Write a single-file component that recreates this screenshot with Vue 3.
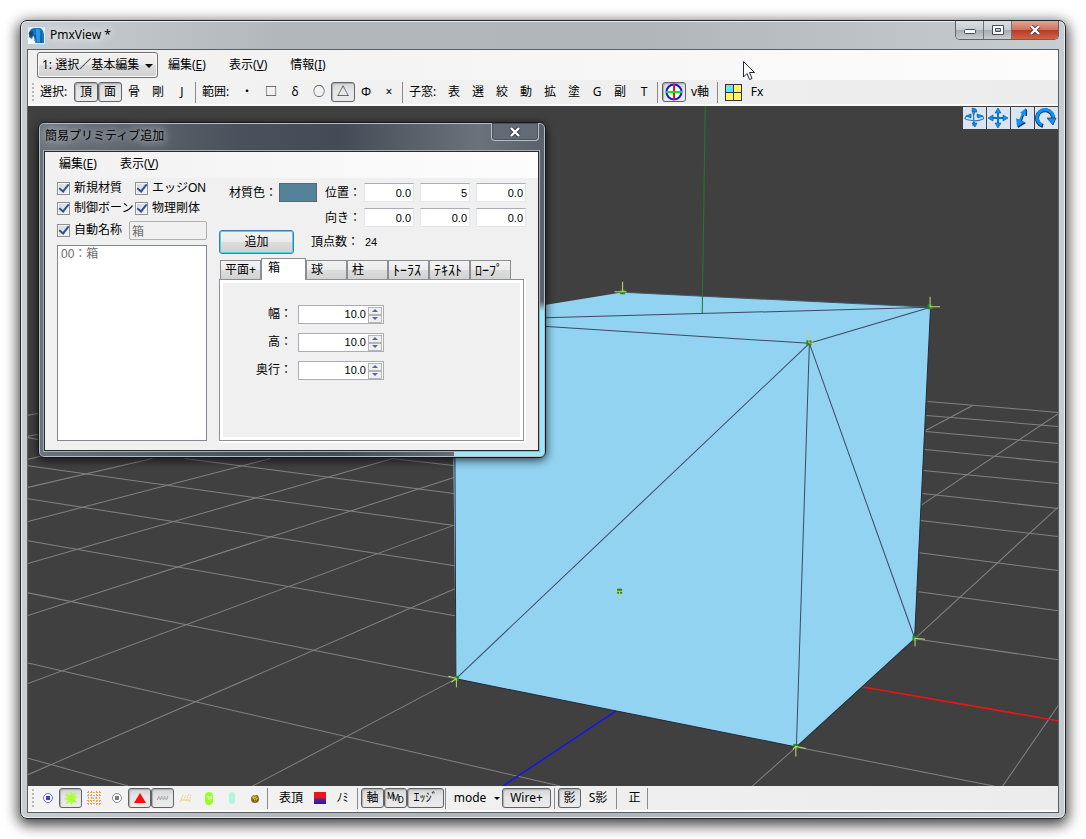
<script setup>
import { ref } from 'vue'

const mode = ref('1: 選択／基本編集')
const materialName = ref('箱')

const menus = [
  { label: '編集', key: 'E' },
  { label: '表示', key: 'V' },
  { label: '情報', key: 'I' },
]

const toolGroups = [
  { label: '選択:', items: ['頂', '面', '骨', '剛', 'J'], active: ['頂', '面'] },
  { label: '範囲:', items: ['・', '□', 'δ', '○', '△', 'Φ', '×'], active: ['△'] },
  { label: '子窓:', items: ['表', '選', '絞', '動', '拡', '塗', 'G', '副', 'T'], active: [] },
]
const narrow = ['Φ', 'G']

const checks = ref([
  { label: '新規材質', on: true },
  { label: 'エッジON', on: true },
  { label: '制御ボーン', on: true },
  { label: '物理剛体', on: true },
])
const autoName = ref(true)

const position = ref(['0.0', '5', '0.0'])
const rotation = ref(['0.0', '0.0', '0.0'])

const tabs = [
  { name: '平面+' },
  { name: '箱' },
  { name: '球' },
  { name: '柱' },
  { name: 'ﾄｰﾗｽ', kana: true },
  { name: 'ﾃｷｽﾄ', kana: true },
  { name: 'ﾛｰﾌﾟ', kana: true },
]
const activeTab = ref('箱')

const sizes = ref([
  { id: 'w', label: '幅：', value: '10.0' },
  { id: 'h', label: '高：', value: '10.0' },
  { id: 'd', label: '奥行：', value: '10.0' },
])

const step = (s, d) => {
  s.value = (parseFloat(s.value) + d).toFixed(1)
}

const grid = [
  [28, 415, 44, 412], [28, 436, 44, 433], [28, 437, 44, 440], [28, 459, 44, 455],
  [28, 465, 454, 525], [185, 458, 454, 493], [392, 458, 454, 465], [28, 498, 455, 565],
  [28, 540, 455, 615], [28, 592, 456, 678], [28, 662, 560, 785], [28, 757, 129, 785],
  [28, 774, 455, 588], [253, 785, 456, 678], [28, 683, 453, 525], [28, 615, 454, 477],
  [28, 563, 393, 458], [28, 521, 271, 458], [28, 487, 153, 458],
  [927, 401, 1058, 412], [926, 415, 1058, 426], [925, 431, 1058, 443], [924, 449, 1058, 462],
  [923, 470, 1058, 483], [922, 493, 1058, 508], [920, 520, 1058, 536], [919, 552, 1058, 570],
  [918, 591, 1058, 610], [914, 638, 1058, 659], [796, 746, 993, 785],
  [972, 405, 925, 430], [1058, 413, 920, 505], [1058, 506, 914, 638], [1058, 704, 1002, 785],
  [796, 746, 752, 785],
]

const edges = [
  [452, 320, 930, 307], [452, 320, 809, 343], [809, 343, 930, 307],
  [809, 343, 456, 678], [809, 343, 796, 746], [809, 343, 914, 637],
]

const vertices = [
  { x: 622.5, y: 291.5, arms: 'M-8 0H4M0 -10V0' },
  { x: 929.5, y: 306.5, arms: 'M0 0H10M0 -10V0' },
  { x: 808.5, y: 342.5, arms: 'M0 0L11 1M0 -11V0' },
  { x: 619.5, y: 590.5, arms: 'M-7 0H4M0 0V8' },
  { x: 456.5, y: 677.5, arms: 'M-8 -2L0 0V9M-5 4L0 0' },
  { x: 914.5, y: 637.5, arms: 'M10 1L0 0V8' },
  { x: 795.5, y: 745.5, arms: 'M10 2L0 0V10M-3 3L0 0' },
]
</script>

<template>
  <div class="desktop">
    <main class="window">
      <header class="titlebar">
        <svg class="app-icon" viewBox="0 0 17 17" aria-hidden="true">
          <rect width="17" height="17" fill="#e9edf0" />
          <path d="M1 6Q2 1 7 1H12Q15 2 16 7L16 16H8L7 11L5 9L4 12L1 10Z" fill="#1675bd" />
          <path d="M8 2Q12 1 13 6L12 15H9L8 8Z" fill="#299be5" />
          <path d="M1 6L4 4L5 8L3 10ZM7 8V16M13 4V16" fill="#26405e" stroke="#0c4b85" />
          <path d="M0 11L4 14H7V17H0Z" fill="#fff" />
        </svg>
        <h1 class="title">PmxView *</h1>
        <div class="caption-buttons">
          <button type="button" class="cap" aria-label="最小化">
            <svg viewBox="0 0 14 10"><rect x="1.500" y="4.500" width="11" height="4" rx="1" fill="#fff" stroke="#454b58" /></svg>
          </button>
          <button type="button" class="cap" aria-label="最大化">
            <svg viewBox="0 0 14 10"><path d="M1.500 .5H12.500V9.500H1.500ZM4.500 3.500V6.500H9.500V3.500Z" fill="#fff" fill-rule="evenodd" stroke="#454b58" /></svg>
          </button>
          <button type="button" class="cap cap-close" aria-label="閉じる">
            <svg viewBox="0 0 14 10"><path d="M3 1L11 9M11 1L3 9" stroke="#50393d" stroke-width="4" /><path d="M3 1L11 9M11 1L3 9" stroke="#fff" stroke-width="2.400" /></svg>
          </button>
        </div>
      </header>

      <div class="client">
        <nav class="menubar">
          <div class="mode-wrap">
            <select v-model="mode" class="mode-select" aria-label="モード">
              <option>1: 選択／基本編集</option>
            </select>
            <span class="caret"></span>
          </div>
          <button v-for="m in menus" :key="m.key" type="button" class="menu">{{ m.label }}(<u>{{ m.key }}</u>)</button>
          <svg class="cursor" viewBox="0 0 12 20" aria-hidden="true">
            <path d="M.5 .5V16L4 12.500L6.500 18.500L9 17.500L6.500 11.500H11.500Z" fill="#fff" stroke="#26263a" />
          </svg>
        </nav>

        <div class="toolbar" role="toolbar">
          <span class="grip"></span>
          <template v-for="g in toolGroups" :key="g.label">
            <span class="tool-label">{{ g.label }}</span>
            <button v-for="t in g.items" :key="t" type="button" class="tool" :class="{ on: g.active.includes(t), narrow: narrow.includes(t) }">{{ t }}</button>
            <span class="sep"></span>
          </template>
          <button type="button" class="tool on axis-btn" aria-label="軸">
            <svg width="18" height="18" viewBox="0 0 18 18">
              <circle cx="9" cy="9" r="7.500" fill="#fff" stroke="#1414e6" stroke-width="2" />
              <path d="M9 1V17" stroke="#f01414" stroke-width="2" /><path d="M1 9H17" stroke="#14e614" stroke-width="2" />
            </svg>
          </button>
          <button type="button" class="tool wide">v軸</button>
          <span class="sep gap"></span>
          <button type="button" class="tool" aria-label="分割表示">
            <svg width="17" height="17" viewBox="0 0 17 17">
              <rect x=".5" y=".5" width="16" height="16" fill="#fff85c" stroke="#333" />
              <rect x="1" y="1" width="7" height="7" fill="#62e6fb" /><path d="M8.500 1V16M1 8.500H16" stroke="#333" />
            </svg>
          </button>
          <button type="button" class="tool">Fx</button>
        </div>

        <section class="viewport">
          <svg class="scene" viewBox="28 106 1030 679" preserveAspectRatio="xMidYMid slice" aria-label="3Dビュー">
            <rect x="28" y="106" width="1030" height="679" fill="#404040" />
            <g stroke="#828282">
              <line v-for="(l, i) in grid" :key="i" :x1="l[0]" :y1="l[1]" :x2="l[2]" :y2="l[3]" />
            </g>
            <path d="M861 686L1058 720" stroke="#ee1414" stroke-width="1.500" />
            <path d="M616 710L503 785" stroke="#1414f0" stroke-width="1.500" />
            <path d="M452 320L623 292L930 307L914 638L796 746L456 678Z" fill="#91d3f1" />
            <path d="M455 450L456 678L796 746L914 638L930 307" fill="none" stroke="#252b3a" />
            <path d="M623 292L930 307" stroke="#43566a" />
            <path d="M705 106L702 313" stroke="#1f7a24" />
            <g stroke="#3f4862">
              <line v-for="(l, i) in edges" :key="i" :x1="l[0]" :y1="l[1]" :x2="l[2]" :y2="l[3]" />
            </g>
            <g v-for="(v, i) in vertices" :key="i" :transform="`translate(${v.x} ${v.y})`">
              <rect x="-2.500" y="-2.500" width="5" height="5" fill="#2b8420" />
              <path :d="v.arms" fill="none" stroke="#c8d27e" />
            </g>
          </svg>

          <div class="nav-tiles">
            <button type="button" class="tile" aria-label="回転">
              <svg viewBox="0 0 22 22">
                <path d="M9 3Q12 11 10 19M12 4Q9 11 12 18M4 9Q-1 12 6 13Q14 15 20 12Q22 10 18 9" fill="none" stroke="#277fbd" stroke-width="1.200" />
                <path d="M9 1L13 2L14 5L10 5ZM3 9L8 7L8 11ZM14 9L14 7L20 9L15 11ZM9 16L14 16L12 20Z" fill="#0794ff" stroke="#164c73" stroke-width=".6" />
              </svg>
            </button>
            <button type="button" class="tile" aria-label="移動">
              <svg viewBox="0 0 22 22">
                <path d="M11 4V18M4 11H18" stroke="#164c73" stroke-width="2" />
                <path d="M11 1L14 6H8ZM21 11L16 14V8ZM11 21L8 16H14ZM1 11L6 8V14Z" fill="#0794ff" stroke="#164c73" stroke-width=".6" />
                <path d="M11 5V17M5 11H17" stroke="#0794ff" stroke-width="1.200" />
              </svg>
            </button>
            <button type="button" class="tile" aria-label="ズーム">
              <svg viewBox="0 0 22 22">
                <path d="M15 2V9L12 8L10 14L14 16L6 21L5 12L8 13L11 7L9 6Z" fill="#1a2335" transform="translate(1 0)" />
                <path d="M15 1V9L12 8L10 14L14 15L6 20L5 11L8 13L11 6L9 6Z" fill="#0794ff" />
              </svg>
            </button>
            <button type="button" class="tile" aria-label="ロール">
              <svg viewBox="0 0 22 22">
                <path d="M8 19A8 8 0 1 1 18 12" fill="none" stroke="#18304b" stroke-width="4" />
                <path d="M7 18A8 8 0 1 1 18 12" fill="none" stroke="#0794ff" stroke-width="3" />
                <path d="M12 11H21L18 18Z" fill="#0794ff" stroke="#18304b" stroke-width=".7" />
              </svg>
            </button>
          </div>

          <section class="dialog" role="dialog" aria-label="簡易プリミティブ追加">
            <header class="dlg-title">
              <h2>簡易プリミティブ追加</h2>
              <button type="button" class="dlg-close" aria-label="閉じる">
                <svg width="14" height="10" viewBox="0 0 14 10"><path d="M3 1L11 9M11 1L3 9" stroke="#333a44" stroke-width="4" /><path d="M3 1L11 9M11 1L3 9" stroke="#fff" stroke-width="2.400" /></svg>
              </button>
            </header>
            <div class="dlg-client">
              <nav class="dlg-menu">
                <button v-for="m in menus.slice(0, 2)" :key="m.key" type="button" class="menu">{{ m.label }}(<u>{{ m.key }}</u>)</button>
              </nav>
              <div class="dlg-body">
                <div class="left">
                  <div class="checks">
                    <label v-for="c in checks" :key="c.label" class="check"><input v-model="c.on" type="checkbox" />{{ c.label }}</label>
                  </div>
                  <div class="auto">
                    <label class="check"><input v-model="autoName" type="checkbox" />自動名称</label>
                    <input v-model="materialName" class="name-input" type="text" aria-label="名称" disabled />
                  </div>
                  <ul class="list"><li>00：箱</li></ul>
                </div>

                <div class="right">
                  <div class="row">
                    <span class="lbl-color">材質色：</span>
                    <button type="button" class="swatch" aria-label="材質色"></button>
                    <span class="lbl-vec">位置：</span>
                    <div class="vec"><input v-for="(p, i) in position" :key="i" v-model="position[i]" type="text" :aria-label="`位置 ${i + 1}`" /></div>
                  </div>
                  <div class="row">
                    <span class="lbl-vec">向き：</span>
                    <div class="vec"><input v-for="(p, i) in rotation" :key="i" v-model="rotation[i]" type="text" :aria-label="`向き ${i + 1}`" /></div>
                  </div>
                  <div class="add-row">
                    <button type="button" class="add">追加</button>
                    <span class="count-label">頂点数：</span><span class="count">24</span>
                  </div>
                  <div class="tabs" role="tablist">
                    <button v-for="t in tabs" :key="t.name" type="button" role="tab" class="tab" :class="{ current: t.name === activeTab, kana: t.kana }" :aria-selected="t.name === activeTab" @click="activeTab = t.name">{{ t.name }}</button>
                  </div>
                  <div class="panel" role="tabpanel">
                    <div v-for="s in sizes" :key="s.id" class="size">
                      <label :for="`size-${s.id}`">{{ s.label }}</label>
                      <div class="spin">
                        <input :id="`size-${s.id}`" v-model="s.value" type="text" />
                        <div class="arrows">
                          <button type="button" aria-label="増やす" @click="step(s, 1)"><svg viewBox="0 0 6 3"><path d="M0 3L3 0L6 3Z" fill="#5463b5" /></svg></button>
                          <button type="button" aria-label="減らす" @click="step(s, -1)"><svg viewBox="0 0 6 3"><path d="M0 0L3 3L6 0Z" fill="#5463b5" /></svg></button>
                        </div>
                      </div>
                    </div>
                  </div>
                </div>
              </div>
            </div>
          </section>
        </section>

        <footer class="toolbar bottom" role="toolbar">
          <span class="grip"></span>
          <button type="button" class="tool" aria-label="頂点">
            <svg viewBox="0 0 16 16"><circle cx="8" cy="8" r="4.500" fill="#fff" stroke="#6a6ae0" /><rect x="6" y="6" width="4" height="4" fill="#3c3cd8" /></svg>
          </button>
          <button type="button" class="tool on" aria-label="法線">
            <svg viewBox="0 0 16 16"><path d="M8 1L10 4L13 2L12 6L15 7L12 9L14 13L10 12L8 15L7 12L3 14L4 10L1 9L4 7L2 3L6 5Z" fill="#a8ff38" /><path d="M4 12L12 4M3 9L9 3M7 13L13 7" stroke="#d3ff8c" stroke-dasharray="1 1" /></svg>
          </button>
          <button type="button" class="tool" aria-label="ワイヤー">
            <svg viewBox="0 0 16 16"><path d="M1 2.500H15M1 5.500H15M1 10.500H15M1 13.500H15M2.500 1V15M5.500 1V15M10.500 1V15M13.500 1V15M6 8H10" stroke="#eda14c" stroke-dasharray="2 1" /></svg>
          </button>
          <button type="button" class="tool" aria-label="中心">
            <svg viewBox="0 0 16 16"><circle cx="8" cy="8" r="4.500" fill="#fff" stroke="#8b8b8b" /><rect x="6" y="6" width="4" height="4" fill="#7b7b7b" /></svg>
          </button>
          <button type="button" class="tool on" aria-label="面">
            <svg viewBox="0 0 16 16"><path d="M8 3L14 13H2Z" fill="#fa0c0c" /></svg>
          </button>
          <button type="button" class="tool on" aria-label="エッジ線">
            <svg viewBox="0 0 16 16"><path d="M2 10L4 6M5 10L7 6M8 10L10 6M11 10L13 6M3 8H13" stroke="#999" stroke-dasharray="2 1" fill="none" /></svg>
          </button>
          <button type="button" class="tool" aria-label="選択線">
            <svg viewBox="0 0 16 16"><path d="M2 12L5 5M5 11L8 5M8 11L11 4M11 12L13 5M3 10H13" stroke="#ead27d" stroke-dasharray="2 1" fill="none" /></svg>
          </button>
          <button type="button" class="tool" aria-label="剛体">
            <svg viewBox="0 0 16 16"><rect x="4" y="2" width="8" height="13" rx="4" fill="#98ff28" /><path d="M6 7L8 6V10M10 6V9" stroke="#f4ffe5" fill="none" /></svg>
          </button>
          <button type="button" class="tool" aria-label="ジョイント">
            <svg viewBox="0 0 16 16"><rect x="5" y="2" width="6" height="12" rx="3" fill="#b4f5de" /></svg>
          </button>
          <button type="button" class="tool" aria-label="ボーン">
            <svg viewBox="0 0 16 16"><circle cx="8" cy="9" r="4" fill="#7c7028" /><path d="M5 7L8 5L11 8L8 12Z" fill="#c9ca35" /><path d="M6 10H11M8 6V12M10 5V8" stroke="#8b321d" stroke-dasharray="1 1" /></svg>
          </button>
          <span class="sep"></span>
          <button type="button" class="tool word">表頂</button>
          <button type="button" class="tool" aria-label="ウェイト"><span class="heat"></span></button>
          <button type="button" class="tool">ﾉﾐ</button>
          <span class="sep late"></span>
          <button type="button" class="tool on">軸</button>
          <button type="button" class="tool on" aria-label="MMD">
            <svg class="mmd" viewBox="0 0 18 16"><text x="0 5 11" y="9 11 13">MMD</text></svg>
          </button>
          <button type="button" class="tool on edge">ｴｯｼﾞ</button>
          <span class="sep"></span>
          <button type="button" class="tool mode">mode<span class="caret small"></span></button>
          <button type="button" class="tool on wire">Wire+</button>
          <span class="sep late"></span>
          <button type="button" class="tool on">影</button>
          <button type="button" class="tool word">S影</button>
          <span class="sep"></span>
          <button type="button" class="tool">正</button>
          <span class="sep"></span>
        </footer>
      </div>
    </main>
  </div>
</template>

<style>
html, body { margin: 0; background: #fff; }
</style>

<style scoped>
* { box-sizing: border-box; }
.desktop {
  display: flex;
  min-height: 100vh;
  padding: 20px;
  background: #fff;
  color: #000;
  font: 12px/16px "Noto Sans", "Noto Sans CJK JP", sans-serif;
  overflow: hidden;
}
button, input, select { font: inherit; color: inherit; margin: 0; padding: 0; border-radius: 0; }
button { background: none; border: 0; white-space: nowrap; }
svg { display: block; }

.window {
  flex: 1;
  display: flex;
  flex-direction: column;
  min-width: 0;
  padding: 0 6px 5px;
  border: 1px solid #22262b;
  border-radius: 7px;
  background: linear-gradient(90deg, #c9ced2 0, #b2b7bb 260px, #b1b6ba 60%, #c8cdd1 100%);
  box-shadow: inset 0 0 0 1px #e8ebee, 0 4px 14px 2px rgba(0, 0, 0, .75);
}
.titlebar { display: flex; height: 28px; align-items: flex-start; }
.app-icon { width: 17px; height: 17px; margin: 6px 5px 0 1px; }
.title {
  margin: 5px 0 0;
  padding: 0 12px 0 0;
  font-size: 12px;
  font-weight: 400;
  line-height: 18px;
  text-shadow: 0 0 8px #fff, 0 0 12px #fff;
}
.caption-buttons {
  display: flex;
  margin-left: auto;
  border: 1px solid #5e646b;
  border-top: 0;
  border-radius: 0 0 5px 5px;
  overflow: hidden;
}
.cap {
  display: grid;
  place-items: center;
  width: 28px;
  height: 18px;
  border-right: 1px solid #6d737a;
  background: linear-gradient(#dcdfe2, #c8cbcf 50%, #a8acb1 51%, #c8ccd1);
}
.cap svg { width: 14px; height: 10px; }
.cap-close { width: 46px; border: 0; background: linear-gradient(#e5a493, #d0705b 50%, #bb3a22 51%, #d16245); }

.client {
  flex: 1;
  display: flex;
  flex-direction: column;
  min-height: 0;
  border: 1px solid #5a5f64;
  background: #f0f0f0;
}
.menubar {
  position: relative;
  display: flex;
  align-items: center;
  gap: 23px;
  height: 30px;
  padding-left: 9px;
  background: linear-gradient(90deg, #f0f0f0, #fcfcfc);
}
.mode-wrap { position: relative; margin-right: -13px; }
.mode-select {
  appearance: none;
  display: block;
  width: 121px;
  height: 26px;
  padding: 0 18px 0 4px;
  border: 1px solid #707070;
  border-radius: 3px;
  background: linear-gradient(#f2f2f2, #ebebeb 50%, #dddddd 51%, #d0d0d0);
  box-shadow: inset 0 0 0 1px #fafafa;
}
.caret {
  position: absolute;
  right: 5px;
  top: 12px;
  border: 4px solid transparent;
  border-top-color: #000;
  border-bottom: 0;
}
.menu u { text-underline-offset: 1px; }
.cursor { position: absolute; left: 715px; top: 11px; width: 12px; height: 20px; z-index: 2; }

.toolbar {
  display: flex;
  align-items: center;
  height: 26px;
  padding: 1px 0 1px 4px;
  background: linear-gradient(90deg, #f3f3f3, #ececec);
  border-bottom: 2px solid #fbfbfb;
}
.grip {
  width: 2px;
  height: 18px;
  margin-right: 6px;
  background: repeating-linear-gradient(#b8b8b8 0 2px, transparent 2px 4px);
}
.tool-label { width: 33px; white-space: nowrap; }
.grip + .tool-label { width: 34px; }
.tool {
  display: flex;
  align-items: center;
  justify-content: center;
  flex: none;
  width: 24px;
  height: 20px;
}
.tool.narrow { width: 22px; }
.tool.on {
  border: 1px solid #5f6368;
  border-radius: 3px;
  background: linear-gradient(#d2d3d5, #e5e5e6 40%, #ebebeb);
  box-shadow: inset 1px 1px 1px #aaacae;
}
.sep { flex: none; width: 1px; height: 21px; margin: 0 6px 0 1px; background: #8a8a8a; }
.axis-btn { margin-left: -2px; }
.tool.wide { width: 28px; }
.gap { margin: 0 3px; }

.viewport { position: relative; flex: 1; min-height: 360px; overflow: hidden; background: #404040; }
.scene { position: absolute; inset: 0; width: 100%; height: 100%; }
.nav-tiles { position: absolute; right: 0; top: 1px; display: flex; gap: 1px; }
.tile { width: 23px; height: 22px; background: #d9e6f2; }
.tile svg { width: 22px; height: 22px; }

.dialog {
  position: absolute;
  left: 10px;
  top: 16px;
  width: 508px;
  padding: 0 6px 6px 5px;
  border: 1px solid #15191d;
  border-radius: 6px;
  background:
    linear-gradient(#9ce5fb, #9ce5fb) right bottom / 91px 6px no-repeat,
    linear-gradient(transparent, #9ce5fb 10px) right bottom / 7px 156px no-repeat,
    linear-gradient(90deg, #6c737a, #49525c 200px, #434c56 300px, #6b727c 440px, #59616b);
  box-shadow: inset 0 0 0 1px #b6bec5, 0 2px 10px rgba(0, 0, 0, .75);
}
.dlg-title { display: flex; justify-content: space-between; height: 28px; }
.dlg-title h2 {
  margin: 4px 0 0 1px;
  font-size: 12px;
  font-weight: 400;
  line-height: 18px;
  text-shadow: 0 0 7px #aeb5bb, 0 0 10px #aeb5bb, 0 0 14px #aeb5bb;
}
.dlg-close {
  display: grid;
  place-items: center;
  width: 48px;
  height: 18px;
  border: 1px solid #b6bec6;
  border-top: 0;
  border-radius: 0 0 4px 4px;
  background: #626a75;
  box-shadow: inset 0 0 0 1px #4a525c;
}
.dlg-client { border: 1px solid #252b31; background: #f0f0f0; outline: 1px solid #a5adb4; }
.dlg-menu { display: flex; gap: 23px; height: 26px; padding: 0 0 2px 14px; background: linear-gradient(90deg, #f1f1f1, #fdfdfd); }
.dlg-body {
  display: flex;
  gap: 12px;
  padding: 0 14px 9px 12px;
  font-family: "Liberation Sans", "Noto Sans CJK JP", sans-serif;
}
.left { display: flex; flex-direction: column; width: 150px; }
.checks { display: grid; grid-template-columns: 78px 72px; grid-auto-rows: 20px; }
.check { display: flex; align-items: center; gap: 4px; white-space: nowrap; }
.check input {
  appearance: none;
  flex: none;
  display: grid;
  place-items: center;
  width: 13px;
  height: 13px;
  border: 1px solid #8e8f8f;
  background: linear-gradient(135deg, #cfd5db, #f6f6f6);
  box-shadow: inset 0 0 0 1px #f4f4f4;
}
.check input:checked::before {
  content: "";
  width: 4px;
  height: 8px;
  margin-top: -2px;
  border: solid #35508f;
  border-width: 0 2px 2px 0;
  transform: rotate(38deg);
}
.auto { display: flex; justify-content: space-between; align-items: center; height: 24px; }
.name-input {
  width: 78px;
  height: 19px;
  padding: 0 2px;
  border: 1px solid #afafaf;
  border-radius: 2px;
  background: #f0f0f0;
  color: #6d6d6d;
}
.list { flex: 1; margin: 3px 0 0; padding: 0 3px; border: 1px solid #828790; background: #fff; color: #6d6d6d; list-style: none; }

.right { flex: 1; display: flex; flex-direction: column; min-width: 0; padding-top: 5px; }
.row { display: flex; align-items: center; justify-content: flex-end; height: 19px; margin: 0 -2px 6px 0; white-space: nowrap; }
.lbl-color { width: 50px; }
.swatch { width: 38px; height: 19px; border: 1px solid #646464; background: #54829a; }
.lbl-vec { width: 47px; padding-left: 8px; }
.vec { display: flex; gap: 6px; }
.vec input {
  width: 50px;
  height: 19px;
  padding: 0 2px 0 0;
  border: 1px solid #e2e6ec;
  border-top-color: #abadb3;
  background: #fff;
  font-size: 11px;
  text-align: right;
}
.add-row { display: flex; align-items: center; height: 24px; margin-top: -3px; }
.add {
  width: 75px;
  height: 24px;
  margin-right: 17px;
  border: 1px solid #3c7fb1;
  border-radius: 3px;
  background: linear-gradient(#f2f2f2, #ebebeb 50%, #dddddd 51%, #cfcfcf);
  box-shadow: inset 0 0 0 1px #48d1f5;
}
.count-label { width: 54px; white-space: nowrap; }
.count { font-size: 11px; }
.tabs { display: flex; align-items: flex-end; height: 21px; margin-top: 4px; padding-left: 1px; }
.tab {
  width: 41px;
  height: 19px;
  padding-left: 4px;
  border: 1px solid #8c8e96;
  border-bottom: 0;
  background: linear-gradient(#f3f3f3, #ebebeb 50%, #dddddd 51%, #d2d2d2);
  text-align: left;
}
.tab.kana { font-size: 14px; }
.tab.current { position: relative; width: 45px; height: 22px; margin-bottom: -1px; padding: 0 0 3px 6px; background: #fff; }
.panel {
  flex: 1;
  display: flex;
  flex-direction: column;
  gap: 8px;
  min-height: 162px;
  padding: 24px 0 0;
  border: 1px solid #8c8e96;
  background: #f0f0f0;
  box-shadow: inset 0 0 0 3px #fff, 1px 1px 0 1px #fff;
}
.size { display: flex; align-items: center; height: 20px; }
.size label { width: 78px; padding-right: 6px; text-align: right; }
.spin { display: flex; align-items: flex-start; width: 86px; height: 19px; border: 1px solid #abadb3; background: #fff; padding: 1px 1px 0 0; }
.spin input { flex: 1; min-width: 0; width: 0; height: 15px; padding: 0 2px 0 0; border: 0; background: none; font-size: 11px; text-align: right; }
.arrows { width: 14px; }
.arrows button { display: grid; place-items: center; width: 14px; height: 8px; border: 1px solid #b5b5b8; background: #f0f0f0; }
.arrows svg { width: 6px; height: 3px; }

.bottom .tool { width: 23px; }
.bottom .tool > svg { width: 16px; height: 16px; }
.bottom .grip { margin-right: 2px; }
.bottom .tool.word { width: 34px; }
.bottom .tool.edge { width: 37px; }
.bottom .tool.mode { width: 50px; gap: 8px; }
.bottom .tool.wire { width: 49px; }
.bottom .sep.late { margin: 0 3px; }
.caret.small { position: static; border-width: 3px; border-bottom: 0; }
.heat { width: 12px; height: 12px; background: linear-gradient(#e8141c 45%, #5d268a 60%, #2412bd); }
.bottom .tool > .mmd { width: 18px; }
.mmd text { font-size: 8px; }
</style>
